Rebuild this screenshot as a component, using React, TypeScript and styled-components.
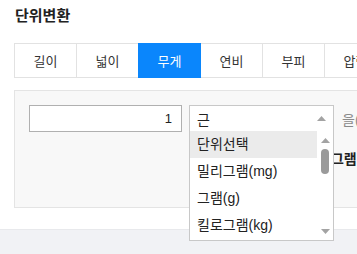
import React, { useState } from "react";
import styled, { createGlobalStyle } from "styled-components";

const GlobalStyle = createGlobalStyle`
  body {
    margin: 0;
    background: #fff;
    font-family: "Liberation Sans", "Noto Sans CJK KR", sans-serif;
    overflow: hidden;
  }
`;

const tabs = ["길이", "넓이", "무게", "연비", "부피", "압력"];
const units = ["단위선택", "밀리그램(mg)", "그램(g)", "킬로그램(kg)"];

const Caret = ({ up }: { up?: boolean }) => (
  <svg width="9" height="5" viewBox="0 0 9 5">
    <path d={up ? "M0 5 L4.5 0 L9 5 Z" : "M0 0 L4.5 5 L9 0 Z"} fill="#a3a3a3" />
  </svg>
);

const App = () => {
  const [active, setActive] = useState(2);
  const [value] = useState("1");

  return (
    <Page>
      <GlobalStyle />
      <Title>단위변환</Title>
      <TabRow>
        {tabs.map((t, idx) => (
          <Tab key={t} active={idx === active} onClick={() => setActive(idx)}>
            {t}
          </Tab>
        ))}
      </TabRow>
      <Panel>
        <Row>
          <NumberInput value={value} readOnly />
          <SelectWrap>
            <SelectBox>
              <span>근</span>
              <Caret up />
            </SelectBox>
            <DropList>
              <Options>
                {units.map((u, idx) => (
                  <Option key={u} selected={idx === 0}>
                    {u}
                  </Option>
                ))}
              </Options>
              <ScrollBar>
                <Caret up />
                <Thumb />
                <Spacer />
                <Caret />
              </ScrollBar>
            </DropList>
          </SelectWrap>
          <Suffix>을(를)</Suffix>
        </Row>
        <Result>1근 = 600그램</Result>
      </Panel>
      <Footer />
    </Page>
  );
};

export default App;

const Page = styled.div`
  width: 357px;
  height: 254px;
  overflow: hidden;
`;

const Title = styled.h2`
  margin: 0;
  box-sizing: border-box;
  height: 43px;
  padding: 6px 15px 0;
  font-size: 15px;
  line-height: 20px;
  font-weight: 700;
  color: #222;
`;

const TabRow = styled.div`
  display: flex;
  width: max-content;
  margin-left: 15px;
  height: 35px;
`;

const Tab = styled.div<{ active?: boolean }>`
  width: 63px;
  flex-shrink: 0;
  box-sizing: border-box;
  margin-left: -1px;
  display: flex;
  align-items: center;
  justify-content: center;
  border: 1px solid ${(p) => (p.active ? "#0a86fc" : "#e2e2e2")};
  background: ${(p) => (p.active ? "#0a86fc" : "#fff")};
  color: ${(p) => (p.active ? "#fff" : "#333")};
  font-size: 13px;
  position: relative;
  z-index: ${(p) => (p.active ? 1 : 0)};
  cursor: pointer;
`;

const Panel = styled.div`
  margin: 12px 0 0 14px;
  box-sizing: border-box;
  height: 118px;
  padding: 14px 14px;
  background: #f8f8f8;
  border: 1px solid #e4e4e4;
  border-right: none;
`;

const Row = styled.div`
  display: flex;
  align-items: center;
  gap: 7px;
  white-space: nowrap;
`;

const NumberInput = styled.input`
  box-sizing: border-box;
  width: 153px;
  height: 27px;
  border: 1px solid #b0b0b0;
  background: #fff;
  text-align: right;
  padding: 0 9px;
  font-family: "Liberation Sans", sans-serif;
  font-size: 13px;
  color: #222;
  outline: none;
`;

const SelectWrap = styled.div`
  position: relative;
  width: 145px;
  flex: 0 0 145px;
`;

const SelectBox = styled.div`
  box-sizing: border-box;
  height: 27px;
  border: 1px solid #c8c8c8;
  background: #fff;
  display: flex;
  align-items: center;
  justify-content: space-between;
  padding: 0 7px 0 7px;
  font-size: 14px;
  color: #222;
`;

const DropList = styled.div`
  position: absolute;
  top: 26px;
  left: 0;
  box-sizing: border-box;
  width: 145px;
  height: 110px;
  display: flex;
  background: #fff;
  border: 1px solid #c8c8c8;
  border-top: none;
  z-index: 5;
`;

const Options = styled.div`
  flex: 1;
  display: flex;
  flex-direction: column;
`;

const Option = styled.div<{ selected?: boolean }>`
  height: 27px;
  line-height: 27px;
  padding-left: 7px;
  font-size: 14px;
  color: #222;
  background: ${(p) => (p.selected ? "#ebebeb" : "#fff")};
`;

const ScrollBar = styled.div`
  width: 16px;
  display: flex;
  flex-direction: column;
  align-items: center;
  padding: 7px 0 6px;
  box-sizing: border-box;
`;

const Thumb = styled.div`
  width: 8px;
  height: 25px;
  margin-top: 6px;
  border-radius: 4px;
  background: #9a9a9a;
`;

const Spacer = styled.div`
  flex: 1;
`;

const Suffix = styled.span`
  margin-left: 1px;
  font-size: 14px;
  color: #8a8a8a;
`;

const Result = styled.div`
  margin-top: 16px;
  padding-left: 242px;
  font-size: 14px;
  font-weight: 700;
  color: #222;
  white-space: nowrap;
`;

const Footer = styled.div`
  margin-top: 21px;
  height: 30px;
  background: #f1f2f5;
  border-top: 1px solid #e8e9ec;
`;
